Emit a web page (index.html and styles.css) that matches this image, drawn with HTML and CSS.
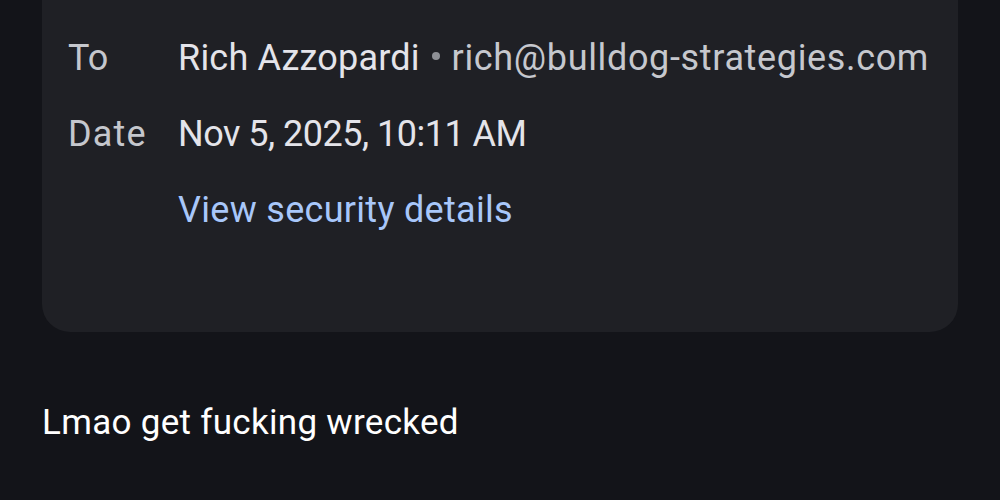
FILE: index.html
```html
<!DOCTYPE html>
<html>
<head>
<meta charset="utf-8">
<link rel="stylesheet" href="styles.css">
</head>
<body>
<div class="page">
  <div class="card">
    <div class="row">
      <div class="label">To</div>
      <div class="value"><span class="name">Rich Azzopardi</span> <span class="dot"></span> <span class="email">rich@bulldog-strategies.com</span></div>
    </div>
    <div class="row">
      <div class="label wide-label">Date</div>
      <div class="value date">Nov 5, 2025, 10:11 AM</div>
    </div>
    <div class="row">
      <div class="label"></div>
      <div class="value link">View security details</div>
    </div>
  </div>
  <div class="body-text">Lmao get fucking wrecked</div>
</div>
</body>
</html>
```
FILE: styles.css
```css
html, body {
  margin: 0;
  padding: 0;
  background: #131419;
  width: 1000px;
  height: 500px;
  overflow: hidden;
}
.page {
  padding: 0 42px;
  font-family: Roboto, "Noto Sans", sans-serif;
}
.card {
  background: #1f2025;
  border-radius: 0 0 28px 28px;
  margin-top: -40px;
  padding: 60px 26px 84px;
  display: flex;
  flex-direction: column;
}
.row {
  display: flex;
  height: 76px;
  align-items: center;
  font-size: 36px;
}
.label {
  width: 110px;
  flex: none;
  color: #c5c7cd;
}
.wide-label {
  letter-spacing: 1.2px;
}
.value {
  color: #e4e4ea;
  white-space: nowrap;
}
.name {
  letter-spacing: 0.2px;
}
.date {
  letter-spacing: -0.5px;
}
.dot {
  display: inline-block;
  width: 8px;
  height: 8px;
  border-radius: 50%;
  background: #8e9096;
  vertical-align: 10px;
  margin: 0 3px;
}
.email {
  color: #c6c8ce;
  letter-spacing: 0.65px;
}
.link {
  color: #a8c7fa;
  letter-spacing: 0.3px;
}
.body-text {
  margin-top: 70px;
  color: #ffffff;
  font-size: 35px;
  letter-spacing: 0.3px;
}
```
